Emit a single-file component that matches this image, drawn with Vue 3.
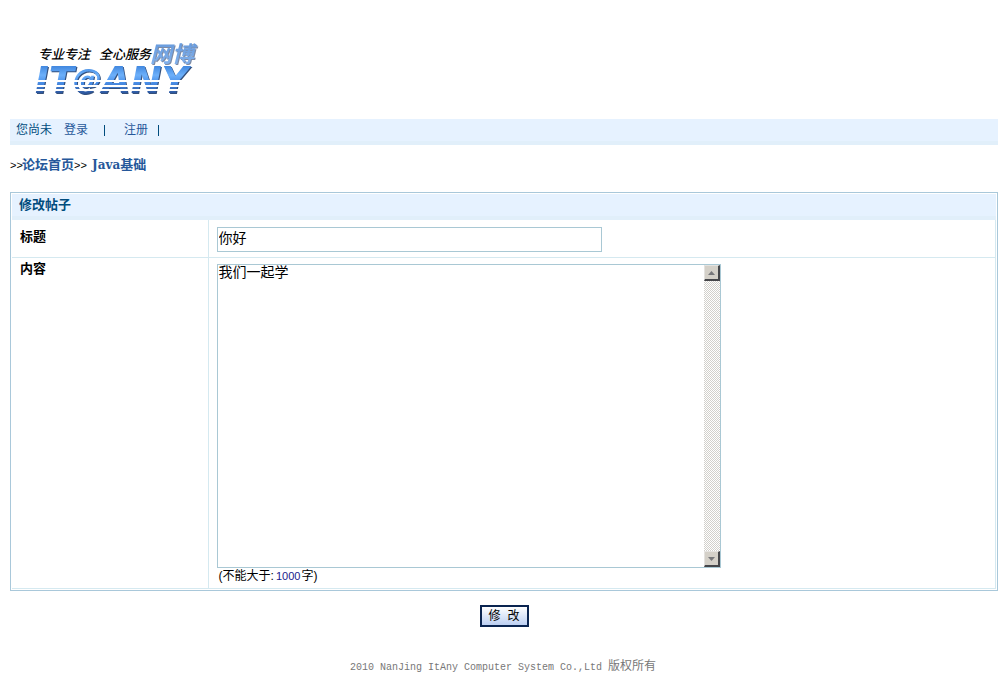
<script setup>
import { ref } from 'vue'

const title = ref('你好')
const content = ref('我们一起学')
const area = ref(null)
const scroll = (step) => area.value.scrollBy(0, step)
</script>

<template>
  <div class="page">
    <header>
      <svg class="logo" width="180" height="76" viewBox="0 0 180 76" role="img" aria-label="IT@ANY 网博">
        <defs>
          <linearGradient id="steel" gradientUnits="userSpaceOnUse" x1="0" y1="29" x2="0" y2="58">
            <stop offset="0" stop-color="#3c83dc" />
            <stop offset="0.35" stop-color="#6db0fa" />
            <stop offset="0.6" stop-color="#4a90ea" />
            <stop offset="1" stop-color="#2a5298" />
          </linearGradient>
          <linearGradient id="sky" x1="0" y1="0" x2="0" y2="1">
            <stop offset="0" stop-color="#5f94d8" />
            <stop offset="1" stop-color="#86b4ee" />
          </linearGradient>
          <mask id="stripes" maskUnits="userSpaceOnUse" x="0" y="20" width="180" height="56">
            <rect x="0" y="20" width="180" height="56" fill="#fff" />
            <rect x="0" y="44" width="180" height="2" fill="#000" />
            <rect x="0" y="49" width="180" height="2" fill="#000" />
            <rect x="0" y="53" width="180" height="2" fill="#000" />
          </mask>
        </defs>
        <g class="slogan">
          <text x="9" y="23">专业专注</text>
          <text x="70" y="23">全心服务</text>
        </g>
        <text class="brand" x="121" y="26" fill="url(#sky)">网博</text>
        <g mask="url(#stripes)">
          <g class="word" fill="url(#steel)">
            <text x="6" y="57">IT</text>
            <text class="at" x="44" y="53">@</text>
            <text x="73" y="57">ANY</text>
          </g>
        </g>
      </svg>
    </header>

    <nav class="bar">
      <span>您尚未</span>
      <a class="login" href="#login">登录</a>
      <i class="sep"></i>
      <a class="register" href="#register">注册</a>
      <i class="sep"></i>
    </nav>

    <div class="crumbs">
      <span class="arrows">&gt;&gt;</span><a href="#home">论坛首页</a><span class="arrows">&gt;&gt;</span>
      <a class="board" href="#java"><span class="latin">Java</span>基础</a>
    </div>

    <form @submit.prevent>
      <section class="panel">
        <h1>修改帖子</h1>
        <div class="row">
          <label class="name" for="title">标题</label>
          <div class="field">
            <input id="title" v-model="title" type="text">
          </div>
        </div>
        <div class="row">
          <label class="name top" for="content">内容</label>
          <div class="field top">
            <div class="editor">
              <textarea id="content" ref="area" v-model="content"></textarea>
              <div class="track">
                <button type="button" aria-label="向上滚动" @click="scroll(-20)">
                  <svg width="7" height="4" viewBox="0 0 7 4"><path d="M0 4L3.500 0L7 4Z" fill="#77777a" /></svg>
                </button>
                <button type="button" aria-label="向下滚动" @click="scroll(20)">
                  <svg width="7" height="4" viewBox="0 0 7 4"><path d="M0 0L3.500 4L7 0Z" fill="#77777a" /></svg>
                </button>
              </div>
            </div>
            <p class="hint">(不能大于:<span class="limit">1000</span>字)</p>
          </div>
        </div>
      </section>
      <button class="submit" type="submit">修 改</button>
    </form>

    <footer><span class="en">2010 NanJing ItAny Computer System Co.,Ltd </span>版权所有</footer>
  </div>
</template>

<style>
body {
  background: #fff;
}
</style>

<style scoped>
.page {
  padding: 36px 9px 16px 10px;
  font: 12px/16px "Liberation Sans", "Noto Sans CJK SC", sans-serif;
  color: #000;
}
.page * {
  box-sizing: border-box;
}
a {
  color: #26589a;
  text-decoration: none;
}
header {
  height: 83px;
  padding-left: 19px;
}
.logo {
  display: block;
}
.slogan {
  font: italic 500 13px "Noto Sans CJK SC", sans-serif;
}
.brand {
  font: italic bold 22px "Noto Sans CJK SC", sans-serif;
  filter: drop-shadow(1px 1px 0 #7d8ba6);
}
.word {
  font: italic bold 37px "DejaVu Sans", sans-serif;
  filter: drop-shadow(1px 1px 0 #34507c);
}
.at {
  font-size: 29px;
}
.bar {
  display: flex;
  align-items: center;
  height: 26px;
  padding: 0 6px;
  background: #e6f2ff;
  border-bottom: 4px solid #e1effa;
  color: #004c7d;
}
.login {
  margin: 0 16px 0 12px;
}
.register {
  margin: 0 10px 0 19px;
}
.sep {
  width: 1px;
  height: 11px;
  background: #004c7d;
}
.crumbs {
  display: flex;
  align-items: center;
  margin: 12px 0 19px;
  font-size: 13px;
  font-weight: bold;
}
.arrows {
  width: 12px;
  font: 11px/16px "Liberation Sans", sans-serif;
}
.board {
  margin-left: 6px;
}
.latin {
  font: bold 12px/16px "DejaVu Serif", serif;
}
.panel {
  padding: 1px;
  border: 1px solid #a9c8da;
}
h1 {
  height: 26px;
  margin: 0;
  padding: 3px 7px 0;
  background: #e6f2ff;
  border-bottom: 4px solid #e1effa;
  font-size: 13px;
  line-height: 16px;
  color: #004c7d;
}
.row {
  display: grid;
  grid-template-columns: 20% 1fr;
  border-bottom: 1px solid #d5e9f0;
  border-right: 1px solid #d5e9f0;
}
.name {
  padding: 9px 8px;
  border-right: 1px solid #d5e9f0;
  font-size: 13px;
  font-weight: bold;
}
.name.top {
  padding-top: 3px;
}
.field {
  padding: 7px 8px 5px;
}
.field.top {
  padding: 6px 8px 4px;
}
input {
  display: block;
  width: 385px;
  height: 25px;
  padding: 0 1px 6px;
  border: 1px solid #a9c8d4;
  border-radius: 0;
  background: #fff;
  font: 14px/16px "Liberation Sans", "Noto Sans CJK SC", sans-serif;
  color: #000;
}
.editor {
  display: flex;
  width: 504px;
  height: 304px;
  border: 1px solid #a9c8d4;
}
textarea {
  flex: 1;
  padding: 0 1px;
  border: 0;
  resize: none;
  overflow: hidden;
  font: 14px/14px "Liberation Sans", "Noto Sans CJK SC", sans-serif;
  color: #000;
}
.track {
  display: flex;
  flex-direction: column;
  justify-content: space-between;
  width: 16px;
  background: repeating-conic-gradient(#d2d0cb 0 25%, #fff 0 50%) 0 0 / 2px 2px;
}
.track button {
  display: flex;
  align-items: center;
  justify-content: center;
  height: 16px;
  padding: 0;
  border: 1px solid #e4e2df;
  border-right: 2px solid #45464a;
  border-bottom: 2px solid #45464a;
  background: #d4d0c8;
}
.hint {
  margin: 0;
  padding-left: 2px;
}
.limit {
  padding: 0 1px 0 2px;
  color: #1a1a8c;
  font-size: 11px;
}
.submit {
  display: block;
  width: 49px;
  height: 22px;
  margin: 14px auto 0;
  padding: 1px 0 0;
  border: 2px solid #0a2450;
  border-radius: 0;
  background: linear-gradient(#fff, #bccff2);
  font: 12px/16px "Liberation Mono", "Noto Sans CJK SC", monospace;
  color: #000;
}
footer {
  margin-top: 31px;
  padding-right: 2px;
  text-align: center;
  color: #777;
}
.en {
  font: 10px/16px "Liberation Mono", monospace;
  white-space: pre;
}
</style>
